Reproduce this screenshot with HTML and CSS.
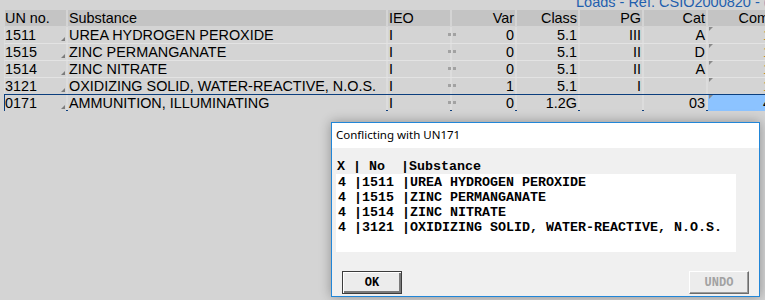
FILE: index.html
```html
<!DOCTYPE html>
<html lang="en">
<head>
  <meta charset="UTF-8">
  <title>Loads - Ref. CSIO2000820</title>
  <link rel="stylesheet" href="styles.css">
</head>
<body>

  <!-- window caption, clipped at the top -->
  <div class="caption">Loads - Ref. CSIO2000820 - (</div>

  <!-- load grid -->
  <div class="grid">
    <div class="row head">
      <div class="cell">UN no.</div>
      <div class="cell pad">Substance</div>
      <div class="cell pad">IEO</div>
      <div class="cell num">Var</div>
      <div class="cell num">Class</div>
      <div class="cell num">PG</div>
      <div class="cell num">Cat</div>
      <div class="cell num">Com</div>
    </div>

    <div class="row">
      <div class="cell un">1511</div>
      <div class="cell pad">UREA HYDROGEN PEROXIDE</div>
      <div class="cell ieo">I<span class="mark"></span></div>
      <div class="cell num">0</div>
      <div class="cell num">5.1</div>
      <div class="cell num">III</div>
      <div class="cell num">A</div>
      <div class="cell com">1</div>
    </div>

    <div class="row">
      <div class="cell un">1515</div>
      <div class="cell pad">ZINC PERMANGANATE</div>
      <div class="cell ieo">I<span class="mark"></span></div>
      <div class="cell num">0</div>
      <div class="cell num">5.1</div>
      <div class="cell num">II</div>
      <div class="cell num">D</div>
      <div class="cell com">1</div>
    </div>

    <div class="row">
      <div class="cell un">1514</div>
      <div class="cell pad">ZINC NITRATE</div>
      <div class="cell ieo">I<span class="mark"></span></div>
      <div class="cell num">0</div>
      <div class="cell num">5.1</div>
      <div class="cell num">II</div>
      <div class="cell num">A</div>
      <div class="cell com">1</div>
    </div>

    <div class="row">
      <div class="cell un">3121</div>
      <div class="cell pad">OXIDIZING SOLID, WATER-REACTIVE, N.O.S.</div>
      <div class="cell ieo">I<span class="mark"></span></div>
      <div class="cell num">1</div>
      <div class="cell num">5.1</div>
      <div class="cell num">I</div>
      <div class="cell num"></div>
      <div class="cell com">1</div>
    </div>

    <div class="row selected">
      <div class="cell un">0171</div>
      <div class="cell pad">AMMUNITION, ILLUMINATING</div>
      <div class="cell ieo">I<span class="mark"></span></div>
      <div class="cell num">0</div>
      <div class="cell num">1.2G</div>
      <div class="cell num"></div>
      <div class="cell num">03</div>
      <div class="cell com active">4</div>
    </div>
  </div>

  <!-- conflict dialog -->
  <div class="dialog">
    <div class="dialog-title">Conflicting with UN171</div>
    <div class="dialog-body">
      <div class="list-head">X | No  |Substance</div>
      <div class="listbox">
        <div class="line">4 |1511 |UREA HYDROGEN PEROXIDE</div>
        <div class="line">4 |1515 |ZINC PERMANGANATE</div>
        <div class="line">4 |1514 |ZINC NITRATE</div>
        <div class="line">4 |3121 |OXIDIZING SOLID, WATER-REACTIVE, N.O.S.</div>
      </div>
      <div class="buttons">
        <button type="button" class="btn">OK</button>
        <button type="button" class="btn disabled">UNDO</button>
      </div>
    </div>
  </div>

</body>
</html>
```

FILE: styles.css
```css
body {
  margin: 0;
  width: 765px;
  height: 300px;
  overflow: hidden;
  position: relative;
  background-color: #d4d4d4;
  font-family: 'Liberation Sans', Arial, sans-serif;
  font-size: 14.4px;
  color: #000;
}

.caption {
  height: 10px;
  padding-left: 576px;
  margin-top: -3px;
  margin-bottom: 3px;
  font-size: 14.5px;
  line-height: 10px;
  color: #1f5fae;
  white-space: nowrap;
}

/* grid */
.row {
  display: grid;
  grid-template-columns: 61px 318px 62px 63px 61px 62px 62px 62px;
  column-gap: 2px;
  margin-left: 4px;
  width: 766px;
  border-left: 1px solid transparent;
  border-bottom: 1px solid #e3e3e3;
  background-color: #dcdcdc;
  line-height: 16px;
  height: 16px;
}

.row.head {
  background-color: transparent;
  border-bottom-color: #d4d4d4;
}

.row.head .cell {
  background-color: #c4c4c4;
}

.cell {
  position: relative;
  background-color: #d4d4d4;
  white-space: nowrap;
  overflow: visible;
}

.pad {
  padding-left: 1px;
}

.num {
  text-align: right;
  padding-right: 1px;
}

/* small triangle in the UN no. cell */
.un::after {
  content: '';
  position: absolute;
  right: 1px;
  bottom: 2px;
  border-left: 4px solid transparent;
  border-bottom: 4px solid #7c7c7c;
}

.ieo {
  display: flex;
  justify-content: space-between;
  align-items: center;
  padding-left: 1px;
  z-index: 1;
}

.mark {
  width: 3px;
  height: 3px;
  margin-right: -1px;
  margin-top: -2px;
  background-color: #a2a2a2;
  box-shadow: 5px 0 0 #a2a2a2;
}

/* Com column: only the first sliver is visible in the window */
.com {
  padding-left: 55px;
  color: #c98a22;
}

.com::before {
  content: '';
  position: absolute;
  left: 1px;
  top: 0;
  border-top: 4px solid #8a8a8a;
  border-right: 4px solid transparent;
}

.row.selected {
  margin-top: -1px;
  border-top: 1px solid #0c3f7e;
  border-bottom: 1px solid #0c3f7e;
  border-left-color: #0c3f7e;
  height: 15px;
}

.com.active {
  background-color: #8cc3ff;
  color: #000;
}

/* dialog window */
.dialog {
  position: absolute;
  left: 331px;
  top: 122px;
  width: 427px;
  height: 173px;
  border: 1px solid #2186d8;
  background-color: #f0f0f0;
  box-shadow: 0 0 11px rgba(0, 0, 0, 0.32);
  z-index: 2;
}

.dialog-title {
  height: 25px;
  padding-left: 4px;
  background-color: #fff;
  font-family: 'Noto Sans', 'Open Sans', sans-serif;
  font-size: 11.5px;
  line-height: 23px;
}

.dialog-body {
  padding: 11px 0 0 4px;
  font-family: 'Liberation Mono', 'DejaVu Sans Mono', monospace;
  font-weight: bold;
  font-size: 13.33px;
  line-height: 15px;
}

.list-head {
  padding-left: 1px;
  white-space: pre;
}

.listbox {
  width: 398px;
  height: 77px;
  padding: 1px 0 0 2px;
  background-color: #fff;
}

.line {
  white-space: pre;
}

.buttons {
  display: flex;
  justify-content: space-between;
  margin: 19px 10px 0 6px;
}

.btn {
  width: 60px;
  height: 23px;
  padding: 0;
  background-color: #ececec;
  border: 1px solid #3c3c3c;
  box-shadow: inset 1px 1px #ffffff, inset -2px -2px #7a7a7a;
  font-family: 'Liberation Mono', 'DejaVu Sans Mono', monospace;
  font-weight: bold;
  font-size: 12px;
  color: #000;
}

.btn.disabled {
  border-color: #ffffff #6c6c6c #6c6c6c #ffffff;
  box-shadow: inset -1px -1px #9c9c9c;
  color: #a2a2a2;
}
```
